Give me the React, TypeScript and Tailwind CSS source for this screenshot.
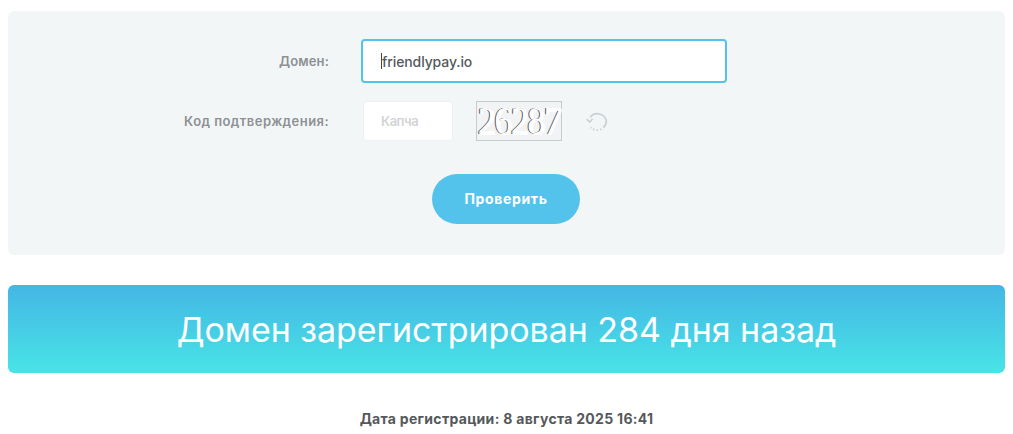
const FONT = "font-['Inter','Noto_Sans',sans-serif]";

function RefreshIcon() {
  return (
    <svg width="24" height="24" viewBox="0 0 24 24" fill="none" className="text-[#c9cfd3]">
      <path d="M5.2 8.2A9.2 9.2 0 0 1 21.4 12a9.2 9.2 0 0 1-3 6.6" stroke="currentColor" strokeWidth="1.6" />
      <path d="M1.6 10.2 4.8 13l2.8-3.2" stroke="currentColor" strokeWidth="1.6" />
      <path d="M16.4 20a9.2 9.2 0 0 1-10.8-1.6" stroke="currentColor" strokeWidth="1.7" strokeDasharray="1.5 2" />
    </svg>
  );
}

function Captcha() {
  return (
    <div className="flex h-10 w-[86px] items-center justify-center border border-[#c8cbcd] bg-[#f1f3f4]">
      <span className="scale-y-[1.1] font-['Liberation_Serif',serif] text-[36px] leading-none font-normal tracking-[-1.5px] text-white [text-shadow:-1px_0_0_#555,1px_1px_0_#fff]">
        26287
      </span>
    </div>
  );
}

export default function App() {
  return (
    <div className={`${FONT} min-h-[434px] bg-white px-2 pt-[11px]`}>
      <section className="flex h-[244px] flex-col rounded-md bg-[#f3f6f7] pt-7">
        <div className="grid grid-cols-[321px_1fr] items-center gap-x-8">
          <label className="pt-0.5 text-right text-[13px] font-semibold tracking-[0.15px] text-[#8d9194]">Домен:</label>
          <div className="flex h-11 w-[366px] items-center rounded border-2 border-[#54c3ec] bg-white pl-[18px] text-sm font-medium text-[#55595c]">
            <span className="h-4 w-px bg-[#444]" />
            <span className="pt-px tracking-[-0.1px]">friendlypay.io</span>
          </div>
        </div>
        <div className="mt-[18px] grid grid-cols-[321px_1fr] items-center gap-x-8">
          <label className="pt-0.5 text-right text-[13px] font-semibold tracking-[0.45px] text-[#8d9194]">Код подтверждения:</label>
          <div className="flex items-center pl-0.5">
            <div className="flex h-10 w-[90px] items-center rounded-sm border border-[#eef0f1] bg-white pt-px pl-[17px] text-[13px] font-semibold tracking-[-0.5px] text-[#d2d5d8]">
              Капча
            </div>
            <div className="ml-[23px]">
              <Captcha />
            </div>
            <div className="ml-[23px]">
              <RefreshIcon />
            </div>
          </div>
        </div>
        <div className="mt-[33px] flex justify-center pr-px">
          <button className="h-[50px] w-[148px] rounded-[25px] bg-[#54c3ec] text-sm font-bold tracking-[0.65px] text-white">
            Проверить
          </button>
        </div>
      </section>
      <section className="mt-[30px] flex h-[88px] items-center justify-center rounded-md bg-gradient-to-b from-[#44b6e4] to-[#48e4e6] text-[34px] font-normal tracking-[-0.05px] text-white">
        Домен зарегистрирован 284 дня назад
      </section>
      <p className="mt-[37px] text-center text-sm leading-[18px] font-bold tracking-[0.3px] text-[#55595c]">
        Дата регистрации: 8 августа 2025 16:41
      </p>
    </div>
  );
}
